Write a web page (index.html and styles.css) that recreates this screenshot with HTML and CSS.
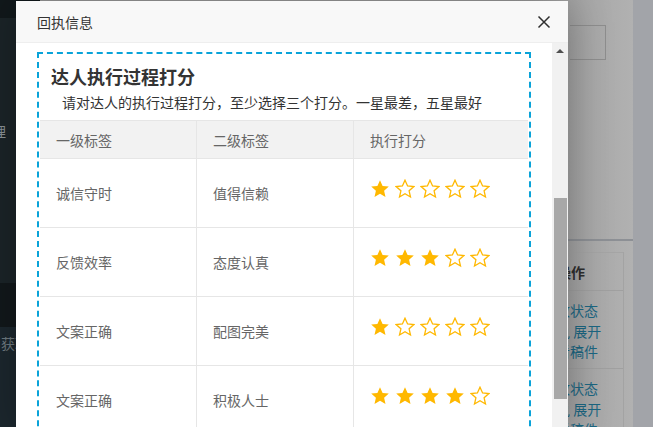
FILE: index.html
```html
<!DOCTYPE html>
<html lang="zh-CN">
<head>
    <meta charset="UTF-8">
    <title>回执信息</title>
    <link rel="stylesheet" href="styles.css">
</head>
<body>
    <div class="page">
        <!-- background page, shaded by the layer -->
        <div class="sidebar">
            <div class="side-top"></div>
            <div class="side-item side-one">管理</div>
            <div class="side-dark"></div>
            <div class="side-item side-two">获取</div>
        </div>
        <div class="main">
            <div class="main-top">
                <div class="search-box"></div>
            </div>
            <div class="main-table">
                <div class="mt-head">操作</div>
                <div class="mt-cell">
                    <div>修改状态</div>
                    <div>回执 展开</div>
                    <div>查看稿件</div>
                </div>
                <div class="mt-cell">
                    <div>修改状态</div>
                    <div>回执 展开</div>
                    <div>查看稿件</div>
                </div>
            </div>
        </div>
        <div class="edge"></div>
    </div>

    <!-- layer -->
    <div class="layer">
        <div class="layer-title">
            <span>回执信息</span>
            <svg class="close" width="14" height="14" viewBox="0 0 14 14">
                <path d="M1.5 1.5 L12.5 12.5 M12.5 1.5 L1.5 12.5" stroke="#2f2f2f" stroke-width="1.5" fill="none"/>
            </svg>
        </div>
        <div class="layer-body">
            <div class="layer-content">
                <div class="score-box">
                    <h2>达人执行过程打分</h2>
                    <p class="tip">请对达人的执行过程打分，至少选择三个打分。一星最差，五星最好</p>
                    <table>
                        <thead>
                            <tr>
                                <th>一级标签</th>
                                <th>二级标签</th>
                                <th>执行打分</th>
                            </tr>
                        </thead>
                        <tbody id="scoreList">
                        </tbody>
                    </table>
                </div>
            </div>
            <div class="scrollbar">
                <div class="arrow"></div>
                <div class="thumb"></div>
            </div>
        </div>
    </div>

    <script>
        // rows of the score table
        var scores = [
            { first: "诚信守时", second: "值得信赖", stars: 1 },
            { first: "反馈效率", second: "态度认真", stars: 3 },
            { first: "文案正确", second: "配图完美", stars: 1 },
            { first: "文案正确", second: "积极人士", stars: 4 }
        ];

        var starPath = "M10 1.2 L12.6 7 L18.8 7.6 L14.1 11.8 L15.5 18 L10 14.8 L4.5 18 L5.9 11.8 L1.2 7.6 L7.4 7 Z";

        function renderStars(n) {
            var html = '<div class="rate">';
            for (var i = 0; i < 5; i++) {
                if (i < n) {
                    html += '<svg width="20" height="20" viewBox="0 0 20 20"><path d="' + starPath + '" fill="#FFB800"/></svg>';
                } else {
                    html += '<svg width="20" height="20" viewBox="0 0 20 20"><path d="' + starPath + '" fill="none" stroke="#FFB800" stroke-width="1.3"/></svg>';
                }
            }
            return html + '</div>';
        }

        var list = document.getElementById('scoreList');
        scores.forEach(function (row) {
            list.innerHTML += `
                <tr>
                    <td>${row.first}</td>
                    <td>${row.second}</td>
                    <td>${renderStars(row.stars)}</td>
                </tr>
            `;
        });
    </script>
</body>
</html>
```

FILE: styles.css
```css
body {
    margin: 0;
    width: 653px;
    height: 427px;
    overflow: hidden;
    position: relative;
    font-family: "Noto Sans CJK SC", "Liberation Sans", sans-serif;
    font-size: 14px;
    color: #333;
}
.page {
    display: flex;
    height: 427px;
}
.sidebar {
    width: 40px;
    flex-shrink: 0;
    background: #1b2428;
    display: flex;
    flex-direction: column;
    overflow: hidden;
}
.side-top {
    height: 18px;
    flex-shrink: 0;
    background: #11181b;
}
.side-item {
    font-size: 14px;
    white-space: nowrap;
}
.side-one {
    height: 265px;
    flex-shrink: 0;
    padding: 103px 0 0 0;
    margin-left: -22px;
    box-sizing: border-box;
    color: #8a9297;
}
.side-dark {
    height: 44px;
    flex-shrink: 0;
    background: #12181b;
}
.side-two {
    flex: 1;
    background: #1c272e;
    padding: 6px 0 0 1px;
    color: #6f7b81;
}
.main {
    flex: 1;
    display: flex;
    flex-direction: column;
    overflow: hidden;
    background: linear-gradient(90deg, #9a9a9a 80%, #b1b1b1 100%);
}
.main-top {
    flex-shrink: 0;
    height: 241px;
    border-bottom: 2px solid #8d9095;
    padding: 25px 0 0 530px;
    box-sizing: border-box;
}
.search-box {
    width: 35px;
    height: 33px;
    border: 1px solid #8e8e8e;
    border-left: none;
}
.main-table {
    flex-shrink: 0;
    width: 583px;
    border-right: 1px solid #a3a3a3;
    margin-top: 11px;
}
.mt-head {
    height: 37px;
    line-height: 38px;
    font-weight: bold;
    color: #2f2f2f;
    border-top: 1px solid #a5a5a5;
    border-bottom: 1px solid #a0a0a0;
    padding-left: 517px;
}
.mt-cell {
    height: 78px;
    padding: 9px 0 0 502px;
    box-sizing: border-box;
    border-bottom: 1px solid #a0a0a0;
    color: #1c6783;
    font-size: 14px;
    line-height: 20.5px;
    white-space: nowrap;
}
.edge {
    width: 20px;
    flex-shrink: 0;
    background: #a2a4a9;
}
.layer {
    position: absolute;
    left: 16px;
    top: 1px;
    width: 552px;
    height: 430px;
    background: #fff;
    box-shadow: 1px 1px 40px rgba(0, 0, 0, 0.3);
    display: flex;
    flex-direction: column;
}
.layer-title {
    flex-shrink: 0;
    height: 41px;
    background: #f8f8f8;
    border-bottom: 1px solid #eee;
    display: flex;
    align-items: center;
    justify-content: space-between;
    padding: 0 17px 0 21px;
    font-size: 14px;
    color: #333;
}
.layer-body {
    flex: 1;
    min-height: 0;
    display: flex;
    overflow: hidden;
}
.layer-content {
    flex: 1;
    padding: 9px 21px 0 21px;
}
.scrollbar {
    width: 16px;
    background: #f1f1f1;
    position: relative;
}
.arrow {
    position: absolute;
    left: 4px;
    top: 6px;
    width: 0;
    height: 0;
    border-left: 4px solid transparent;
    border-right: 4px solid transparent;
    border-bottom: 4px solid #505050;
}
.thumb {
    position: absolute;
    left: 2px;
    top: 155px;
    width: 13px;
    height: 201px;
    background: #a8a8a8;
}
.score-box {
    border: 2px dashed #09a3d9;
    padding: 0 1px;
    height: 400px;
}
.score-box h2 {
    margin: 0;
    padding: 10px 0 0 11px;
    font-size: 18px;
    line-height: 24px;
    font-weight: bold;
    color: #333;
}
.tip {
    margin: 3px 0 0 22px;
    font-size: 14px;
    line-height: 22px;
    color: #333;
}
table {
    width: 100%;
    margin-top: 7px;
    border-collapse: collapse;
    table-layout: fixed;
}
table th,
table td {
    border: 1px solid #e6e6e6;
    padding: 0 0 0 16px;
    text-align: left;
    color: #666;
    font-size: 14px;
    font-weight: normal;
}
table th {
    height: 37px;
    background: #f2f2f2;
}
table th:nth-child(1),
table th:nth-child(2) {
    width: 140px;
}
table td {
    height: 68px;
}
table tr td:first-child,
table tr th:first-child {
    border-left: none;
}
table tr td:last-child,
table tr th:last-child {
    border-right: none;
}
.rate {
    display: flex;
    gap: 5px;
    margin-top: -8px;
}
.rate svg {
    display: block;
}
```
